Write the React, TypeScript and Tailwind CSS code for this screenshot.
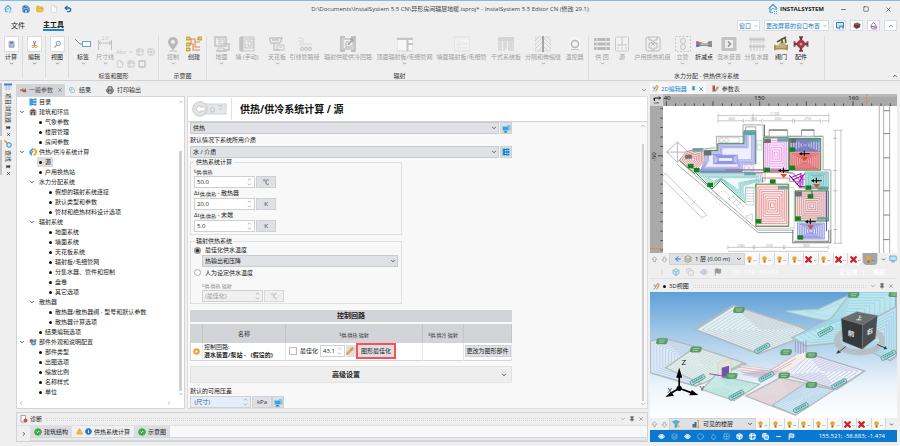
import type { ReactNode } from 'react';
import {
  AlertTriangle,
  ArrowBigDown,
  ArrowBigUp,
  ArrowLeft,
  Box,
  CheckCircle2,
  ChevronDown,
  ChevronLeft,
  ChevronRight,
  ChevronUp,
  Circle,
  Copy,
  Droplet,
  Eye,
  File,
  Flag,
  FolderOpen,
  Grid2x2,
  Info,
  Layers,
  Minus,
  Monitor,
  Pencil,
  Pin,
  Printer,
  Save,
  Square,
  Table2,
  Undo2,
  X,
} from 'lucide-react';
import clsx from 'clsx';

type Point = [number, number];

const G = '#c2c2c2';

// ---------- ribbon drawings (16x16 grid) ----------

const ribbonArt: Record<string, ReactNode> = {
  calc: (
    <>
      <rect fill="#c9d3ea" height="11" rx="1" stroke="#7487b5" width="9" x="3.5" y="2.5" />
      <path d="M5 5h6" stroke="#3c4f8d" strokeWidth="2" />
      <path d="M5 8.5h1.5M8 8.5h1.5M5 11h1.5M8 11h1.5" stroke="#5a6c9f" strokeWidth="1.5" />
      <path d="M10.5 10.5H13" stroke="#d9534f" strokeWidth="1.5" />
    </>
  ),
  cut: (
    <>
      <path d="M6 2l3 8M10 2L7 10" stroke="#555" strokeWidth="1.3" />
      <circle cx="5.5" cy="11.5" r="2" stroke="#e58a2c" strokeWidth="1.6" />
      <circle cx="10.5" cy="11.5" r="2" stroke="#e58a2c" strokeWidth="1.6" />
    </>
  ),
  view: (
    <>
      <circle cx="9.5" cy="6" fill="#d8ecfb" r="4" stroke="#5aa0dc" strokeWidth="1.5" />
      <path d="M6.5 9l-4 4.500" stroke="#e58a2c" strokeWidth="2" />
    </>
  ),
  tag: (
    <>
      <path d="M0 3l5 5h3" stroke="#888" />
      <rect fill="#fff" height="5" stroke="#6fa3c4" width="8" x="7.5" y="5.5" />
    </>
  ),
  dim: (
    <>
      <path d="M1.5 4v10M14.5 4v10M1.5 7h13M4 5L2 7l2 2M12 5l2 2-2 2" stroke={G} />
      <text fill={G} fontSize="5" x="4.5" y="4">
        2.0
      </text>
    </>
  ),
  pin: (
    <>
      <path d="M8 1a5 5 0 0 1 5 5c0 3-3 5-5 9-2-4-5-6-5-9a5 5 0 0 1 5-5z" fill="#b9b9b9" />
      <circle cx="8" cy="6" fill="#efefef" r="2" />
      <path d="M4 15h8" stroke={G} />
    </>
  ),
  create: (
    <>
      <path
        d="M2 3h7v3h5M2 8h5v6h7M5 3v5M9 6v5h5M11 3h3"
        stroke="#e8875f"
        strokeWidth="1.2"
      />
      <path
        d="M0 1h4v3H0zM12 1h4v3h-4zM0 7h4v3H0zM0 12h4v3H0z"
        fill="#f3cf3c"
        stroke="#8a7c2e"
        strokeWidth=".6"
      />
    </>
  ),
  floor: (
    <>
      <path d="M1 1h11v9H1z" stroke={G} strokeWidth="1.5" />
      <path d="M3 3h7v5H5V5h3M4 12h6v3H4z" stroke={G} />
      <path d="M10 8h5v6h-5M2 15h11" stroke={G} strokeWidth="1.5" />
    </>
  ),
  wall: (
    <>
      <path d="M1 1h14v14H1z" stroke={G} />
      <path d="M1.5 1v14M3.5 1v14" stroke={G} strokeWidth="2" />
      <path d="M6 3h8v9H6zM8 5h4v5H9V7h1" stroke={G} />
    </>
  ),
  ceiling: (
    <>
      <path d="M0 2h13l-2 5H2zM3 4h7M5 7v7h6" stroke={G} strokeWidth="1.3" />
      <path d="M8 9h7v5H8zM10 11h3" stroke={G} />
    </>
  ),
  route: (
    <>
      <path d="M1 2h5v6h9M1 5h3v6h11" stroke="#d8d8d8" />
      <circle cx="5" cy="13" r="1.5" stroke={G} />
      <circle cx="9" cy="13" r="1.5" stroke={G} />
      <circle cx="13" cy="13" r="1.5" stroke={G} />
    </>
  ),
  circuit: (
    <>
      <path d="M5 1H1v14h4M11 1h4v14h-4" stroke="#adadad" strokeWidth="1.3" />
      <path d="M3 3h8M3 3v10h10V6M6 6h3M6 6v5h5V9" stroke="#cecece" strokeWidth="1.8" />
      <path d="M8 9l5-6M10 3h3v3" stroke="#a5a5a5" strokeWidth="1.6" />
    </>
  ),
  panel: (
    <>
      <path d="M0 2h16v13H0z" fill="#f8f8f8" stroke="#d6d6d6" />
      <path d="M0 3h16M10.5 3v12M10.5 8H16" stroke="#c4c4c4" strokeWidth="2" />
    </>
  ),
  wallPanel: (
    <>
      <path d="M0 1h16v14H0z" fill="#f2f2f2" stroke="#dcdcdc" />
      <path d="M2 9c4-2 8 0 12-2M2 12h12M5 3v11" stroke="#e5e5e5" />
    </>
  ),
  dry: (
    <>
      <path d="M0 1h16v4H0z" fill="#d4d4d4" />
      <path
        d="M1 5v10M3 5v10M6 5v10M8 5v8M11 5v10M13 5v10M15 5v10"
        stroke="#d0d0d0"
        strokeWidth="1.3"
      />
    </>
  ),
  joint: (
    <>
      <path d="M0 1h16v14H0z" stroke="#d8d8d8" />
      <path
        d="M0 5l4-4M0 9l7-7M0 13l7-7M3 15l4-4M16 5l-4-4M16 9L9 2M16 13L9 6M13 15l-4-4"
        stroke="#d0d0d0"
      />
      <path d="M8 0v16" stroke="#9d9d9d" strokeWidth="1.8" />
    </>
  ),
  thermo: (
    <>
      <rect fill="#f5f5f5" height="13" rx="2" width="11" x="2.5" y="1" />
      <circle cx="8" cy="8" r="3.5" stroke="#b5b5b5" strokeWidth="1.5" />
      <path d="M4 13.500h8" stroke={G} />
    </>
  ),
  pipes: (
    <>
      <path d="M0 3.5h16M0 8h16M0 12.5h16" stroke="#b8b8b8" strokeWidth="3" />
      <path d="M3 1.5v13M12 1.5v13" stroke="#e2e2e2" />
    </>
  ),
  source: (
    <>
      <rect fill="#f2f2f2" height="14" rx="1" stroke="#cacaca" width="13" x="1.5" y="1" />
      <path d="M8 1v8M3 9h10M3 12h2M7 12h2M11 12h2" stroke="#c4c4c4" />
    </>
  ),
  station: (
    <>
      <rect height="14" rx="2" stroke="#bcbcbc" width="14" x="1" y="1" />
      <path
        d="M4 1v3h3v3H4v5h3v3M12 1v3H9v3h3v5H9v3M6 6l4 4M10 6l-4 4"
        stroke="#b8b8b8"
      />
    </>
  ),
  riser: (
    <>
      <path d="M.5.5h15v15H.5z" stroke="#c4c4c4" strokeDasharray="2 1.500" />
      <circle cx="8" cy="5" r="2.5" stroke={G} />
      <circle cx="8" cy="11" r="2.5" stroke={G} />
    </>
  ),
  reduce: (
    <>
      <path d="M2 6h3l2 1h4l2-2h3v6h-3l-2-1H5l-3 1z" fill="#8f8f8f" />
      <path d="M5 8h7" stroke="#ddd" />
      <circle cx="1.5" cy="6.5" fill="#e2574b" r="1.6" />
      <circle cx="1.5" cy="9.5" fill="#3a7bd0" r="1.6" />
    </>
  ),
  mixer: (
    <>
      <rect fill="#c2c2c2" height="14" rx="1" width="15" x=".5" y="1" />
      <rect fill="#ededed" height="8" width="8" x="4" y="4" />
      <path d="M7 5.500L9.500 8 7 10.500" stroke="#888" strokeWidth="1.3" />
    </>
  ),
  manifold: (
    <>
      <path d="M0 3.5h16M0 10.5h16" stroke="#c4c4c4" strokeWidth="2" />
      <path
        d="M2 1v6M5 1v6M8 1v6M11 1v6M14 1v6M2 8v7M5 8v7M8 8v7M11 8v7M14 8v7"
        stroke="#cbcbcb"
      />
    </>
  ),
  valve: (
    <>
      <path d="M1 8.500l3 1h7l4-1v6l-4-1H4l-3 1z" fill="#a79257" />
      <path d="M5 9.500l3-4h3l2 4z" fill="#c0ad72" />
      <path d="M4 6l9-5M9 2v5M12 1l1 6" stroke="#5f5a36" strokeWidth="1.6" />
      <path d="M3 11h10" stroke="#dccb94" />
    </>
  ),
  fitting: (
    <>
      <path d="M1.500 5v6M14.500 5v6M6 1h4M6 15h4" stroke="#777" strokeWidth="2" />
      <path d="M1 8h14M8 1v14" stroke="#8d2a33" strokeWidth="2.500" />
      <circle cx="8" cy="8" fill="#a23640" r="4" />
      <circle cx="8" cy="8" fill="#d98b91" r="1.5" />
    </>
  ),
  burner: (
    <>
      <path d="M0 5h6v5H0z" fill="#e8873c" />
      <path d="M5 4h9v8H8L5 9z" fill="#7c6a60" />
      <path d="M7 6h5" stroke="#d9cfc8" strokeWidth="1.5" />
    </>
  ),
};

function Art({ name, className }: { name: string; className?: string }) {
  return (
    <svg className={clsx('shrink-0', className)} fill="none" viewBox="0 0 16 16">
      {ribbonArt[name]}
    </svg>
  );
}

type RibbonItem = {
  label: string;
  art: string;
  width: string;
  menu?: boolean;
  active?: boolean;
};

const radiantItems: RibbonItem[] = [
  { label: '地面', art: 'floor', width: 'w-[21px]', menu: true },
  { label: '墙 (手动)', art: 'wall', width: 'w-[30px]' },
  { label: '天花板', art: 'ceiling', width: 'w-[30px]', menu: true },
  { label: '引线管路径', art: 'route', width: 'w-[25px]' },
  { label: '辐射供暖供冷回路', art: 'circuit', width: 'w-[62px]' },
  { label: '顶面辐射板/毛细管网', art: 'panel', width: 'w-[51px]', menu: true },
  { label: '墙面辐射板/毛细管', art: 'wallPanel', width: 'w-[63px]' },
  { label: '干式系统板', art: 'dry', width: 'w-[26px]' },
  { label: '分隔和伸缩缝', art: 'joint', width: 'w-[48px]', menu: true },
  { label: '温控器', art: 'thermo', width: 'w-[15px]' },
];

const hydraulicItems: RibbonItem[] = [
  { label: '供 回', art: 'pipes', width: 'w-[26px]', menu: true },
  { label: '源', art: 'source', width: 'w-[14px]' },
  { label: '户用换热机组', art: 'station', width: 'w-[47px]' },
  { label: '立管', art: 'riser', width: 'w-[13px]', menu: true },
  { label: '折减点', art: 'reduce', width: 'w-[30px]', active: true },
  { label: '混水装置', art: 'mixer', width: 'w-[20px]', menu: true },
  { label: '分集水器', art: 'manifold', width: 'w-[35px]', menu: true },
  { label: '阀门', art: 'valve', width: 'w-[14px]', menu: true, active: true },
  { label: '配件', art: 'fitting', width: 'w-[26px]', menu: true, active: true },
];

function RibbonButton({ label, art, width, menu, active }: RibbonItem) {
  return (
    <button
      className={clsx(
        'flex shrink-0 flex-col items-center whitespace-nowrap',
        width,
        active ? 'text-[#222]' : 'text-[#a0a0a0]'
      )}
      type="button"
    >
      <Art className="size-4" name={art} />
      <span className="mt-px">{label}</span>
      {menu && <ChevronDown className="size-[5px] text-[#777]" strokeWidth={3} />}
    </button>
  );
}

function BoxButton({ label, art }: { label: string; art: string }) {
  return (
    <button
      className="flex w-[23px] shrink-0 flex-col items-center border-[#dcdcdc] border-r text-[#222]"
      type="button"
    >
      <span className="flex h-4 w-[15px] items-center justify-center border border-[#dcdcdc] bg-white">
        <Art className="size-[9px]" name={art} />
      </span>
      <span className="mt-px">{label}</span>
      <ChevronDown className="size-[5px] text-[#555]" strokeWidth={3} />
    </button>
  );
}

function RibbonGroup({
  title,
  className,
  children,
}: {
  title: string;
  className: string;
  children: ReactNode;
}) {
  return (
    <div className={clsx('flex shrink-0 flex-col border-[#dcdcdc] border-r', className)}>
      <div className="flex flex-1">{children}</div>
      <div className="text-center text-[#333]">{title}</div>
    </div>
  );
}

function Logo({ className }: { className: string }) {
  return (
    <svg className={className} fill="none" viewBox="0 0 20 20">
      <path d="M4 17V9c0-3 3-5 6-8 3 3 6 5 6 8v3" stroke="#1b86d1" strokeWidth="2" />
      <path d="M1 9l9-8 9 8M4 17h6M7 13a3 3 0 0 1 6-2" stroke="#1b86d1" strokeWidth="1.5" />
      <path d="M12 14h2v2h-2zM16 14h2v2h-2zM12 18h2v2h-2zM16 18h2v2h-2z" fill="#29a7df" />
    </svg>
  );
}

function TitleBar() {
  return (
    <header className="flex h-4 items-center px-1">
      <div className="flex w-[200px] items-center gap-2">
        <Logo className="size-2" />
        <div className="flex items-center gap-[6px] pl-[2px]">
          <Save className="size-2 fill-[#9fd0f0] text-[#1f67b1]" strokeWidth={3} />
          <FolderOpen className="size-2 fill-[#f4c544] text-[#d7a52c]" />
          <File className="size-2 fill-white text-[#c9c9c9]" />
          <Undo2 className="size-2 text-[#2467a8]" strokeWidth={4} />
        </div>
      </div>
      <h1 className="flex-1 text-center text-[#444]">
        D:\Documents\InstalSystem 5.5 CN\异形房间辐层地暖.isproj* - InstalSystem 5.5 Editor CN (修改 29.1)
      </h1>
      <div className="flex w-[200px] items-center justify-end gap-4 pr-1">
        <div className="flex items-center gap-[2px]">
          <Logo className="size-[10px]" />
          <span className="font-bold text-[#222]">INSTALSYSTEM</span>
        </div>
        <Minus className="size-[7px]" />
        <Square className="size-[6px]" />
        <X className="size-[7px]" />
      </div>
    </header>
  );
}

function Ribbon() {
  const chip =
    'flex h-[11px] items-center justify-center gap-[3px] border border-[#d9dde0] bg-white text-[#1a78bd]';
  return (
    <div className="border-[#d2d2d2] border-b">
      <nav className="flex h-[17px] items-center">
        <a className="ml-[11px] text-[#222] text-[7px]" href="#file">
          文件
        </a>
        <a
          className="ml-[18px] border-[#1e86d0] border-b-2 font-bold text-[#111] text-[7px]"
          href="#main"
        >
          主工具
        </a>
        <div className="ml-auto flex gap-1 pr-[3px]">
          <button className={clsx(chip, 'w-[23px]')} type="button">
            窗口 <ChevronDown className="size-1" strokeWidth={3} />
          </button>
          <button className={clsx(chip, 'w-[65px]')} type="button">
            更改屏幕的窗口布置 <ChevronDown className="size-1" strokeWidth={3} />
          </button>
          <button aria-label="布局" className={clsx(chip, 'w-[13px]')} type="button">
            <svg className="size-2" viewBox="0 0 16 16">
              <path d="M1 1h14v11H1z" fill="#cfe6f7" stroke="#2b78b5" strokeWidth="2" />
              <path d="M6 7h9v8H6z" fill="#4f9fd8" />
              <path d="M8 11h5v4H8z" fill="#fff" />
            </svg>
          </button>
          <button aria-label="材料" className={clsx(chip, 'w-[13px]')} type="button">
            <svg className="size-2" viewBox="0 0 16 16">
              <path d="M2 3l7-2 6 3-1 7-7 3-6-4z" fill="#8a6257" />
              <path d="M2 6l6 2 6-3M2 9l6 2 6-3" fill="none" stroke="#3a2a28" strokeWidth="1.5" />
            </svg>
          </button>
          <button aria-label="颜色" className={clsx(chip, 'w-[13px]')} type="button">
            <svg className="size-2" fill="none" viewBox="0 0 16 16">
              <path d="M7 1c3 3 5 5 5 8a5 5 0 0 1-10 0c0-3 2-5 5-8z" stroke="#8855b5" strokeWidth="1.8" />
              <circle cx="11" cy="11" fill="#e27fb4" r="4" />
              <path d="M2 9h6" stroke="#3b8fd0" strokeWidth="2" />
            </svg>
          </button>
          <button aria-label="收起" className={clsx(chip, 'w-[13px]')} type="button">
            <ChevronUp className="size-[6px]" strokeWidth={3} />
          </button>
        </div>
      </nav>
      <div className="flex h-[46px] pt-[2px]">
        <div className="flex pb-[2px]">
          <BoxButton art="calc" label="计算" />
          <BoxButton art="cut" label="编辑" />
          <BoxButton art="view" label="视图" />
        </div>
        <RibbonGroup className="w-[90px]" title="标签和图形">
          <RibbonButton active art="tag" label="标签" menu width="w-[28px]" />
          <RibbonButton art="dim" label="尺寸线" menu width="w-4" />
          <div className="flex flex-col gap-1 pt-3 pl-[3px] text-[#c0c0c0]">
            <div className="flex items-center gap-[3px]">
              <span>Abc</span>
              <ChevronDown className="size-1 text-[#888]" strokeWidth={3} />
              <Table2 className="size-2" />
              <Grid2x2 className="size-2" />
            </div>
            <div className="flex items-center gap-[3px]">
              <File className="size-2" />
              <Table2 className="size-2" />
              <Square className="size-2" strokeWidth={4} />
            </div>
          </div>
        </RibbonGroup>
        <RibbonGroup className="w-12" title="示意图">
          <RibbonButton art="pin" label="控制" menu width="w-[28px]" />
          <RibbonButton active art="create" label="创建" width="w-[14px]" />
        </RibbonGroup>
        <RibbonGroup className="w-[382px] pl-[4px]" title="辐射">
          {radiantItems.map((item) => (
            <RibbonButton key={item.label} {...item} />
          ))}
        </RibbonGroup>
        <RibbonGroup className="w-[236px]" title="水力分配 - 供热供冷系统">
          {hydraulicItems.map((item) => (
            <RibbonButton key={item.label} {...item} />
          ))}
        </RibbonGroup>
        <ChevronUp className="mt-auto mr-[2px] mb-px ml-auto size-[6px]" strokeWidth={3} />
      </div>
    </div>
  );
}

// ---------- navigation tree ----------

type TreeRow = {
  label: string;
  level: 0 | 1 | 2;
  open?: boolean;
  icon?: string;
  selected?: boolean;
};

const treeRows: TreeRow[] = [
  { label: '目录', level: 0, icon: 'toc' },
  { label: '建筑和环境', level: 0, open: true, icon: 'building' },
  { label: '气象参数', level: 1 },
  { label: '楼层管理', level: 1 },
  { label: '房间参数', level: 1 },
  { label: '供热/供冷系统计算', level: 0, open: true, icon: 'heat' },
  { label: '源', level: 1, selected: true },
  { label: '户用换热站', level: 1 },
  { label: '水力分配系统', level: 1, open: true },
  { label: '假想的辐射系统连接', level: 2 },
  { label: '默认类型和参数', level: 2 },
  { label: '管材和绝热材料设计选项', level: 2 },
  { label: '辐射系统', level: 1, open: true },
  { label: '地面系统', level: 2 },
  { label: '墙面系统', level: 2 },
  { label: '天花板系统', level: 2 },
  { label: '辐射板/毛细管网', level: 2 },
  { label: '分集水器、管件和控制', level: 2 },
  { label: '盘卷', level: 2 },
  { label: '其它选项', level: 2 },
  { label: '散热器', level: 1, open: true },
  { label: '散热器/散热器阀 - 型号和默认参数', level: 2 },
  { label: '散热器计算选项', level: 2 },
  { label: '结果编辑选项', level: 1 },
  { label: '部件外观和说明配置', level: 0, open: true, icon: 'parts' },
  { label: '部件类型', level: 1 },
  { label: '出图选项', level: 1 },
  { label: '缩放比例', level: 1 },
  { label: '名称样式', level: 1 },
  { label: '单位', level: 1 },
];

function TreeIcon({ name }: { name: string }) {
  return (
    <svg className="mr-[2px] size-2 shrink-0" fill="none" viewBox="0 0 16 16">
      {name === 'toc' && (
        <>
          <path d="M1 1h5v14H1zM9 1h6v4H9zM9 6h6v4H9zM9 11h6v4H9z" fill="#35a0e4" />
          <path d="M6 3h3M6 8h3M6 13h3M7.500 3v10" stroke="#0b5b96" strokeWidth="1.5" />
        </>
      )}
      {name === 'building' && (
        <>
          <path d="M2 5l6-4 6 4v9H2z" fill="#b7a7a5" stroke="#716866" />
          <path d="M5 14V8h6v6M4 5h8" stroke="#544b4a" strokeWidth="2" />
        </>
      )}
      {name === 'heat' && (
        <>
          <path d="M8 1L3 6c-2 3 0 7 3 8M4 11l4-5" stroke="#35a3dc" strokeWidth="3" />
          <path d="M9 2c7 2 7 10 0 12" stroke="#f4a52c" strokeWidth="4" />
        </>
      )}
      {name === 'parts' && (
        <>
          <circle cx="5" cy="6" fill="#d8424d" r="4" />
          <circle cx="12" cy="5" fill="#59a84b" r="3" />
          <circle cx="9" cy="10" fill="#3b9ae0" r="5" />
          <path d="M7 10h4" stroke="#fff" strokeWidth="2" />
        </>
      )}
    </svg>
  );
}

function NavigationTree() {
  return (
    <aside className="flex w-[169px] shrink-0 flex-col border border-[#d5d5d5] bg-white">
      <div className="flex min-h-0 flex-1">
        <ul className="flex min-w-0 flex-1 flex-col">
          {treeRows.map((row) => (
            <li
              className={clsx(
                'flex min-h-[10px] flex-1 items-center whitespace-nowrap text-[#222]',
                row.level === 0 && 'pl-[2px]',
                row.level === 1 && (row.open ? 'pl-3' : 'pl-[20px]'),
                row.level === 2 && 'pl-[30px]'
              )}
              key={row.label}
            >
              {row.level === 0 && !row.open && <span className="w-[10px]" />}
              {row.open && <ChevronDown className="mr-1 size-[6px]" strokeWidth={3} />}
              {row.icon && <TreeIcon name={row.icon} />}
              <span
                className={clsx(
                  'flex h-[10px] items-center gap-[3px]',
                  !row.open && !row.icon && 'px-[2px]',
                  row.selected && 'bg-[#dcdcdc]'
                )}
              >
                {!row.open && !row.icon && <span className="size-[3px] rounded-full bg-[#111]" />}
                {row.label}
              </span>
            </li>
          ))}
        </ul>
        <div className="flex w-[7px] flex-col items-center pt-[2px]">
          <ChevronUp className="size-[6px] text-[#777]" />
          <div className="mt-[46px] w-[3px] flex-1 bg-[#cfd0d3]" />
          <ChevronDown className="size-[6px] text-[#777]" />
        </div>
      </div>
      <div className="flex h-[11px] items-center justify-between pr-3 pl-px text-[#777]">
        <ChevronLeft className="size-[6px]" />
        <ChevronRight className="size-[6px]" />
      </div>
    </aside>
  );
}

// ---------- form controls ----------

function Select({ id, value, className }: { id: string; value: string; className?: string }) {
  return (
    <div className={clsx('relative h-3', className)}>
      <select
        aria-label={value}
        className="h-3 w-full appearance-none border border-[#c9cacd] bg-[#e0e1e4] px-[2px] text-[#222] leading-[8px]"
        defaultValue={value}
        id={id}
      >
        <option>{value}</option>
      </select>
      <ChevronDown
        className="pointer-events-none absolute top-[3px] right-[2px] size-[6px] text-[#333]"
        strokeWidth={3}
      />
    </div>
  );
}

function Spinner({
  id,
  value,
  className,
  tone = 'normal',
}: {
  id: string;
  value: string;
  className: string;
  tone?: 'normal' | 'muted' | 'blue';
}) {
  return (
    <div
      className={clsx(
        'flex h-3 items-center border border-[#d0d0d0]',
        tone === 'normal' && 'bg-white text-[#222]',
        tone === 'muted' && 'bg-[#f0f0f0] text-[#999]',
        tone === 'blue' && 'bg-[#e3eefa] text-[#3c5a94]',
        className
      )}
    >
      <input
        aria-label={value}
        className="w-0 min-w-0 flex-1 bg-transparent pl-[2px] leading-[8px] outline-none"
        defaultValue={value}
        disabled={tone === 'muted'}
        id={id}
      />
      <span className="flex flex-col pr-[2px] text-[#888]">
        <ChevronUp className="size-[5px]" strokeWidth={3} />
        <ChevronDown className="size-[5px]" strokeWidth={3} />
      </span>
    </div>
  );
}

function Unit({ children, muted }: { children: ReactNode; muted?: boolean }) {
  return (
    <button
      className={clsx(
        'h-3 w-5 border',
        muted
          ? 'border-[#d8d8d8] bg-[#efefef] text-[#999]'
          : 'border-[#cfd0d3] bg-[#dfe0e3] text-[#333]'
      )}
      type="button"
    >
      {children}
    </button>
  );
}

function Sub({ children }: { children: ReactNode }) {
  return <span className="relative top-px text-[5px]">{children}</span>;
}

const heatingFields = [
  { id: 'supply', prefix: 't', sub: '供,供热', suffix: '', value: '50.0', unit: '℃' },
  { id: 'radiator', prefix: 'Δt', sub: '供,供热', suffix: ' - 散热器', value: '20.0', unit: 'K' },
  { id: 'terminal', prefix: 'Δt', sub: '供,供热', suffix: ' - 末端', value: '5.0', unit: 'K' },
];

function SideButton({ label, children }: { label: string; children: ReactNode }) {
  return (
    <button
      aria-label={label}
      className="flex h-3 w-3 items-center justify-center border border-[#cfd0d3] bg-[#dfe0e3]"
      type="button"
    >
      {children}
    </button>
  );
}

function ScreenIcon() {
  return (
    <svg className="size-[9px]" viewBox="0 0 18 16">
      <path d="M10 1h7v11h-7z" fill="#7cc6ea" />
      <path d="M1 4h12v8H1z" fill="#39a5dd" stroke="#8cd0f0" />
      <path d="M5 13h4v1.500h2V16H3v-1.500h2z" fill="#2b6f99" />
    </svg>
  );
}

function CircuitTable() {
  const head = 'border-[#c4c5c8] border-r font-normal text-[#333]';
  const cell = 'border-[#e6e6e6] border-r p-0';
  return (
    <table className="mt-[2px] w-full table-fixed border-collapse border border-[#d5d5d5] bg-white">
      <colgroup>
        <col className="w-3" />
        <col className="w-[83px]" />
        <col />
        <col className="w-[41px]" />
        <col className="w-12" />
      </colgroup>
      <thead>
        <tr className="h-[18px] bg-[#d3d4d8]">
          <th className={head} />
          <th className={head}>名称</th>
          <th className={head}>
            t<Sub>供,供热 辐射</Sub>
          </th>
          <th className={head}>
            t<Sub>供,供冷 辐射</Sub>
          </th>
          <th className={head} />
        </tr>
      </thead>
      <tbody>
        <tr className="h-[18px]">
          <td className={cell}>
            <svg className="mx-auto size-[7px]" viewBox="0 0 16 16">
              <circle cx="8" cy="8" fill="#f3a034" r="7.5" />
              <path d="M6 4l5 4-5 4z" fill="#fff" />
            </svg>
          </td>
          <td className={clsx(cell, 'pl-px')}>
            <div className="text-[#222]">控制回路:</div>
            <div className="font-bold text-[#222]">混水装置/泵站 - &nbsp; (假设的)</div>
          </td>
          <td className={clsx(cell, 'pl-[3px]')}>
            <div className="flex items-center whitespace-nowrap">
              <label className="flex items-center gap-[3px]" htmlFor="optimise">
                <input
                  className="size-2 appearance-none border border-[#bdbdbd] bg-white"
                  id="optimise"
                  type="checkbox"
                />
                最佳化
              </label>
              <Spinner className="ml-[2px] w-[25px]" id="optimised" value="43.1" />
              <button aria-label="编辑" className="ml-px h-3 w-[10px] bg-[#dfe0e3]" type="button">
                <Pencil className="size-2 fill-[#f0b13c] text-[#c9852b]" />
              </button>
              <button
                className="h-4 w-10 border-2 border-[#f85055] bg-[#dfe0e3] text-[#222]"
                type="button"
              >
                图形最佳化
              </button>
            </div>
          </td>
          <td className={cell} />
          <td className={cell}>
            <button
              className="mx-auto block h-3 w-[46px] whitespace-nowrap border border-[#cfd0d3] bg-[#dfe0e3] text-[#222]"
              type="button"
            >
              更改为图形部件
            </button>
          </td>
        </tr>
      </tbody>
    </table>
  );
}

function SourceForm() {
  const fieldset = 'w-[212px] border border-[#e0e0e0] px-[3px]';
  return (
    <section className="flex min-w-0 flex-1 flex-col border border-[#dcdcdc] bg-[#f8f8f8]">
      <div className="flex h-[25px] shrink-0 items-center border-[#d2d2d2] border-b bg-white pl-1">
        <svg className="h-4 w-[35px]" fill="none" viewBox="0 0 35 16">
          <path d="M10 3h24v10H10z" fill="#e6e7e9" stroke="#d0d1d4" />
          <circle cx="8" cy="8" fill="#e2e3e5" r="7.3" stroke="#cbccd0" />
          <path d="M8 4L4 8l4 4v-2h5V6H8z" fill="#fff" stroke="#c2c3c6" strokeWidth=".7" />
          <path d="M18 8l2.500-2L23 8M19 8v3h3V8M26 5h5M27 7l1.500 2L30 7" stroke="#c4c5c8" />
        </svg>
        <span className="mx-1 h-[22px] w-px bg-[#e2e2e2]" />
        <h2 className="ml-1 font-bold text-[#111] text-[10px] leading-[14px]">
          供热/供冷系统计算 / 源
        </h2>
      </div>
      <div className="flex min-h-0 flex-1">
        <div className="min-w-0 flex-1 overflow-hidden">
          <div className="w-[324px] max-w-full pl-[2px]">
            <div className="flex gap-px">
              <Select className="flex-1" id="mode" value="供热" />
              <SideButton label="显示">
                <ScreenIcon />
              </SideButton>
            </div>
            <label className="flex h-3 items-center" htmlFor="medium">
              默认情况下系统所用介质
            </label>
            <div className="flex gap-px">
              <Select className="flex-1" id="medium" value="水 / 介质" />
              <SideButton label="目录">
                <svg className="size-2" viewBox="0 0 16 16">
                  <path
                    d="M1 1h5v14H1zM8 1h7v4H8zM8 6h7v4H8zM8 11h7v4H8z"
                    fill="#1e93dd"
                  />
                  <path d="M5 3h4M5 8h4M5 13h4" stroke="#0b5b96" strokeWidth="2" />
                </svg>
              </SideButton>
            </div>
            <fieldset className={clsx(fieldset, 'pb-[2px]')}>
              <legend className="px-[2px]">供热系统计算</legend>
              {heatingFields.map((field) => (
                <div key={field.id}>
                  <label className="block h-[10px] leading-[10px]" htmlFor={field.id}>
                    {field.prefix}
                    <Sub>{field.sub}</Sub>
                    {field.suffix}
                  </label>
                  <div className="flex gap-px">
                    <Spinner className="w-[61px]" id={field.id} value={field.value} />
                    <Unit>{field.unit}</Unit>
                  </div>
                </div>
              ))}
            </fieldset>
            <fieldset className={clsx(fieldset, 'mt-[2px] pb-px')}>
              <legend className="px-[2px]">辐射供热系统</legend>
              <label className="flex h-[10px] items-center gap-1" htmlFor="auto">
                <input
                  className="size-[7px] appearance-none rounded-full border border-[#999] bg-white checked:border-2 checked:bg-[#222]"
                  defaultChecked
                  id="auto"
                  name="supplyMode"
                  type="radio"
                />
                最佳化供水温度
              </label>
              <Select className="ml-2" id="output" value="热输出和压降" />
              <label className="flex h-[11px] items-center gap-1" htmlFor="manual">
                <input
                  className="size-[7px] appearance-none rounded-full border border-[#aaa] bg-white checked:bg-[#222]"
                  id="manual"
                  name="supplyMode"
                  type="radio"
                />
                人为设定供水温度
              </label>
              <label
                className="mt-[2px] ml-2 block h-[10px] text-[#888] leading-[10px]"
                htmlFor="manualValue"
              >
                t<Sub>供,供热 辐射</Sub>
              </label>
              <div className="ml-2 flex gap-px">
                <Spinner className="w-[61px]" id="manualValue" tone="muted" value="(最佳化)" />
                <Unit muted>℃</Unit>
              </div>
            </fieldset>
            <h3 className="mt-[6px] h-3 bg-[#d3d4d8] text-center font-bold text-[7px] leading-[12px]">
              控制回路
            </h3>
            <CircuitTable />
            <button
              className="mt-[5px] flex h-[17px] w-full items-center border border-[#e2e2e2] bg-[#eee] pr-1"
              type="button"
            >
              <span className="flex-1 font-bold text-[7px]">高级设置</span>
              <ChevronDown className="size-[6px]" strokeWidth={3} />
            </button>
            <label className="mt-[3px] flex h-[10px] items-center" htmlFor="pressure">
              默认的可用压差
            </label>
            <div className="flex">
              <Spinner className="mr-px w-[61px]" id="pressure" tone="blue" value=" (尺寸)" />
              <Unit>kPa</Unit>
              <SideButton label="显示压差">
                <ScreenIcon />
              </SideButton>
            </div>
          </div>
        </div>
        <div className="flex w-[9px] flex-col items-center pt-px pb-px">
          <ChevronUp className="size-[6px] text-[#777]" />
          <div className="mt-[15px] w-[2px] flex-1 bg-[#d0d0d0]" />
          <ChevronDown className="size-[6px] text-[#777]" />
        </div>
      </div>
    </section>
  );
}

function DottedGrip() {
  return <span className="mx-1 h-[3px] flex-1 border-[#dadada] border-y border-dotted" />;
}

function PanelTools() {
  return (
    <div className="flex items-center gap-[3px] text-[#666]">
      <ChevronDown className="size-[6px]" />
      <Pin className="size-[6px] fill-current" />
      <X className="size-[6px]" />
    </div>
  );
}

function Diagnostics() {
  const tab = 'flex h-[11px] items-center gap-[2px] px-1';
  return (
    <section className="mt-[3px] flex h-[30px] shrink-0 flex-col border border-[#d2d2d2]">
      <div className="flex h-3 items-center px-[3px]">
        <svg className="mr-[2px] size-2" viewBox="0 0 16 16">
          <path d="M2 1h9v13H2z" fill="#fff" stroke="#555" />
          <circle cx="11" cy="11" fill="#d94a4a" r="4" />
        </svg>
        诊断
        <DottedGrip />
        <PanelTools />
      </div>
      <div className="flex flex-1 border-[#e0e0e0] border-t">
        <div className="flex w-[13px] items-center justify-center">
          <ChevronRight className="size-[6px]" strokeWidth={3} />
        </div>
        <div className="min-w-0 flex-1">
          <div className="flex bg-[#f8f8f8]">
            <button className={clsx(tab, 'bg-[#dcdde0]')} type="button">
              <CheckCircle2 className="size-2 fill-[#3fae49] text-[#3fae49] [&>path]:stroke-white" strokeWidth={3} />
              建筑结构
            </button>
            <button className={clsx(tab, 'bg-[#f0f0f0]')} type="button">
              <AlertTriangle className="size-[7px] fill-[#f8c53a] text-[#d29b1b]" />
              <Info className="size-[7px] fill-[#2b7bc9] text-[#2b7bc9] [&>path]:stroke-white" strokeWidth={3} />
              供热系统计算
            </button>
            <button className={clsx(tab, 'bg-[#dcdde0]')} type="button">
              <CheckCircle2 className="size-2 fill-[#3fae49] text-[#3fae49] [&>path]:stroke-white" strokeWidth={3} />
              示意图
            </button>
          </div>
          <div className="mr-px h-[4px] border border-[#d3d6da] bg-[#e9eaec]" />
        </div>
      </div>
    </section>
  );
}

// ---------- 2D plan ----------

function toPoints(points: Point[]) {
  return points.map((p) => p.join(',')).join(' ');
}

function Loops({
  points,
  color,
  count,
  fill = 'none',
}: {
  points: Point[];
  color: string;
  count: number;
  fill?: string;
}) {
  const cx = points.reduce((s, p) => s + p[0], 0) / points.length;
  const cy = points.reduce((s, p) => s + p[1], 0) / points.length;
  return (
    <>
      {Array.from({ length: count }, (_, i) => {
        const k = 0.97 * (1 - i / count);
        const scaled = points.map(([x, y]): Point => [cx + (x - cx) * k, cy + (y - cy) * k]);
        return (
          <polygon
            fill={i === 0 ? fill : 'none'}
            key={i}
            points={toPoints(scaled)}
            stroke={color}
            strokeWidth={1.5}
          />
        );
      })}
    </>
  );
}

function rect(x1: number, y1: number, x2: number, y2: number): Point[] {
  return [
    [x1, y1],
    [x2, y1],
    [x2, y2],
    [x1, y2],
  ];
}

const planRooms: { points: Point[]; color: string; count: number; fill: string }[] = [
  { points: [[103, 240], [120, 215], [150, 206], [175, 210], [174, 246], [152, 270], [138, 270]], color: '#b04a50', count: 6, fill: '#fbeaea' },
  { points: rect(353, 172, 428, 272), color: '#e05ad8', count: 7, fill: '#fff0ff' },
  { points: rect(430, 174, 523, 214), color: '#35358f', count: 6, fill: '#b9bde4' },
  { points: rect(430, 216, 523, 268), color: '#c8353d', count: 7, fill: '#f4a9a9' },
  { points: rect(330, 310, 428, 436), color: '#dc4a50', count: 9, fill: '#fdf0f0' },
  { points: rect(476, 273, 547, 325), color: '#2f9a96', count: 7, fill: '#d5efee' },
  { points: rect(447, 330, 546, 420), color: '#b4565c', count: 8, fill: '#f6e5e5' },
  { points: rect(453, 425, 535, 474), color: '#4b51c8', count: 6, fill: '#dadcfa' },
];

// L-shaped living room: four runs follow the walls, the rest coil in the middle
function LivingRoomLoops() {
  return (
    <g stroke="#5b5fd0" strokeWidth="1.5">
      {[0, 4, 8, 12].map((i) => (
        <path
          d={`M${178 + i} ${210 + i}H${217 + i}V${190 + i}H${295 + i}V${152 + i}H${330 - i}V${250 - i}H${290 - i}V${272 - i}H${165 + i}L${178 + i} ${240}Z`}
          fill={i === 0 ? '#eef0ff' : 'none'}
          key={i}
        />
      ))}
      {[0, 4, 8, 12, 15].map((i) => (
        <path d={`M${204 + i} ${224 + i / 2}H${276 - i}V${250 - i / 2}H${204 + i}Z`} key={i} />
      ))}
    </g>
  );
}

function HallLoops() {
  return (
    <g stroke="#54a9a9" strokeWidth="1.5">
      <path
        d="M150 275H358V300L330 308V320H300L297 365L225 300L200 325Z"
        fill="#eefafa"
      />
      {[1, 2, 3, 4].map((k) => (
        <path
          d={`M${354 - 5 * k} ${300 - k}V${275 + 4 * k}H${152 + 9 * k}L${200 + k} ${322 - 5 * k}L${225 + k} ${297 - k}L${297 - 4 * k} ${362 - 8 * k}L${296 - 4 * k} ${318 - 3 * k}Z`}
          key={k}
        />
      ))}
    </g>
  );
}

const planMarkers: Point[] = [
  [128, 250], [146, 262], [186, 306], [355, 261], [372, 296], [430, 201], [430, 255],
  [330, 414], [447, 406], [454, 462], [478, 314], [484, 340],
];

const planArrows: Point[] = [
  [474, 222], [412, 272], [510, 302], [492, 424],
];

function FloorPlan() {
  return (
    <svg
      className="h-full w-full bg-white"
      fill="none"
      preserveAspectRatio="xMidYMid slice"
      viewBox="48 78 708 438"
    >
      {/* dimension chains */}
      <g stroke="#777" strokeWidth="1.2">
        <path d="M218 106H547M218 122H293M296 122H348M352 122H440M445 122H522M526 122H547M218 100v28M293 116v12M322 100v22M348 116v12M440 116v12M445 116v12M522 116v12M547 100v28" />
        <path d="M247 498H323M327 498H412M416 498H545M247 510H545M247 492v12M323 492v12M327 492v12M412 492v12M416 492v12M545 492v12" />
        <path d="M566 150V486M583 150V486M560 150h28M560 174h12M560 270h12M560 330h12M560 445h12M560 486h28" />
        <path d="M50 292L170 410M62 278L185 402M50 292l12-14M170 410l15-8M140 370l12-12" />
      </g>
      <path d="M697 78v438M710 78v438M728 78v438" stroke="#666" strokeWidth="1.5" />
      <path d="M710 92h18M710 160h18M710 232h18M710 330h18M710 402h18M710 475h18" stroke="#444" strokeWidth="2" />
      <g fill="#999" fontSize="9">
        <text x="372" y="104">11 500</text>
        <text x="248" y="119">2650</text>
        <text x="312" y="119">1950</text>
        <text x="386" y="119">3300</text>
        <text x="474" y="119">2750</text>
        <text x="276" y="496">2560</text>
        <text x="360" y="496">3100</text>
        <text x="470" y="496">3300</text>
      </g>
      {/* walls */}
      <g stroke="#9a9a9a" strokeWidth="2.5">
        <path d="M213 210V168h80M292 190V134h60v34M300 150v-10h30v10" />
        <path d="M352 168h18v-20h54v20h42v-20h37v20h27v100h23v180M530 168H352" />
        <path d="M370 150h54M466 150h38M356 134v34" stroke="#777" strokeWidth="3" />
        <path d="M172 206l38-4M103 240l47 44 188 163h104M97 252l240 202h105" />
        <path d="M440 446v38h113v-38M547 446v34h-102" stroke="#777" strokeWidth="3" />
        <path d="M97 185l30 27-30 33-32-30zM97 185v60M65 215h62" strokeWidth="2" />
        <path d="M127 212l-20 28M127 212l45-8" strokeWidth="2" />
      </g>
      {/* stairs and fixtures */}
      <g stroke="#999" strokeWidth="1.2">
        <path d="M300 322h24v50h-24zM300 330h24M300 338h24M300 346h24M300 354h24M300 362h24" />
        <path d="M219 172h62v15h-62zM295 252h30v20h-30zM334 180h14v28h-14zM334 194h14" />
        <circle cx="228" cy="180" r="6" />
        <circle cx="243" cy="180" r="6" />
        <circle cx="303" cy="261" r="6" />
        <circle cx="317" cy="261" r="6" />
        <circle cx="232" cy="352" r="20" strokeDasharray="4 4" />
        <path d="M205 330l22 30M246 350l40 38M258 342l38 36M252 356l14-12M262 366l14-12M272 376l14-12M300 405l20-6v20z" />
        <path d="M430 320h14v125M432 440h12M334 442h100" />
      </g>
      <LivingRoomLoops />
      <HallLoops />
      {planRooms.map((room) => (
        <Loops key={toPoints(room.points)} {...room} />
      ))}
      <g stroke="#32913c" strokeWidth="2.5">
        <path d="M353 172h75v100h-75zM430 174h93v95h-93zM330 310h98v126h-98zM447 330h99v90h-99z" />
        <path d="M178 210h39v-20h78v-38h35v98M150 275l50 50 25-25 72 65M165 272h125M103 240l47 40" />
      </g>
      {/* mains */}
      <path d="M240 268H430M330 276H440l20 20h15" stroke="#e0393f" strokeWidth="2" />
      <path d="M160 268H400l40 12 28 26M165 276h165" stroke="#3f45c9" strokeWidth="1.5" />
      <path d="M436 290l30-12M440 298l30-14v30M452 312l24-34M464 320v-40" stroke="#a012c4" strokeWidth="3" />
      <path d="M430 284l30 34h16" stroke="#2512a8" strokeWidth="3" />
      <path d="M497 328v14M540 330v120" stroke="#4a4fd0" strokeWidth="3" />
      <path d="M430 302h30v20h84M350 306V292h80v10" stroke="#e0393f" strokeWidth="2" />
      <g fill="#4f9c9a">
        <path d="M296 154h34v10h-34zM490 175h32v10h-32zM142 203h32v10h-32zM296 276h34v8h-34zM394 174h32v10h-32zM396 315h32v10h-32zM514 318h32v10h-32zM512 408h32v8h-32z" opacity=".8" />
      </g>
      <g fill="#5e5e5e">
        <path d="M355 175h20v13h-20zM432 175h18v12h-18zM176 211h22v14h-22zM447 332h20v15h-20zM120 223h20v12h-20z" opacity=".85" />
      </g>
      {planMarkers.map(([x, y]) => (
        <rect fill="#16801f" height="13" key={`${x}-${y}`} width="17" x={x} y={y} />
      ))}
      {planArrows.map(([x, y]) => (
        <g key={`${x}-${y}`}>
          <path d={`M${x - 10} ${y - 2}h26M${x} ${y - 11}v16`} stroke="#000" strokeWidth="3" />
          <path d={`M${x - 16} ${y - 2}l9-5v10z`} fill="#000" />
          <path d={`M${x - 9} ${y + 8}h20l-10 12z`} fill="#e04a18" />
        </g>
      ))}
    </svg>
  );
}

function HorizontalRuler() {
  const ticks = Array.from({ length: 25 }, (_, i) => 10 + i * 28);
  return (
    <svg
      className="h-3 min-w-0 flex-1 bg-[#a9a9a9]"
      preserveAspectRatio="xMinYMid slice"
      viewBox="0 0 708 36"
    >
      <path d="M0 0h708v8H0z" fill="#bababa" />
      {ticks.map((x, i) => (
        <path d={`M${x} ${i % 5 === 0 ? 22 : 28}V36`} key={x} stroke="#222" strokeWidth="2" />
      ))}
      <path d="M611 0v36" stroke="#e0823a" strokeWidth="2" />
      <g fill="#111" fontSize="18">
        <text x="2" y="17">40</text>
        <text x="274" y="17">150</text>
        <text x="556" y="17">160</text>
      </g>
    </svg>
  );
}

function VerticalRuler() {
  const ticks = Array.from({ length: 16 }, (_, i) => 8 + i * 28);
  return (
    <svg
      className="h-full w-[13px] shrink-0 bg-[#a9a9a9]"
      preserveAspectRatio="xMidYMin slice"
      viewBox="0 0 39 438"
    >
      {ticks.map((y, i) => (
        <path d={`M${i === 5 ? 24 : 31} ${y}H39`} key={y} stroke="#222" strokeWidth="2" />
      ))}
      <text fill="#111" fontSize="18" transform="rotate(-90 17 164)" x="17" y="164">
        -50
      </text>
      <path d="M0 424h39" stroke="#e0823a" strokeWidth="2" />
    </svg>
  );
}

function LayerTabs({ marks, last }: { marks: string; last?: boolean }) {
  return (
    <>
      {marks.split('').map((mark, i) => (
        <button
          className={clsx(
            'flex h-3 min-w-0 flex-1 items-center justify-center gap-px rounded-b-sm border-[#d5d5d5] border-r',
            last && i === marks.length - 1 ? 'bg-[#a5a5a5]' : 'bg-[#f8f8f8]'
          )}
          key={i}
          type="button"
        >
          {mark === 'x' ? (
            <svg className="size-[7px] shrink-0" viewBox="0 0 14 14">
              <path d="M1 1l12 12M13 1L1 13" stroke="#cf2027" strokeWidth="4" />
              <path d="M3 3h8v8H3z" fill="#cf2027" opacity=".6" />
            </svg>
          ) : (
            <svg className="h-[7px] w-[5px] shrink-0" viewBox="0 0 10 14">
              <circle cx="5" cy="5" fill="#f4a522" r="4.5" />
              <path d="M3 9h4v4H3z" fill="#7c6a47" />
            </svg>
          )}
          <span>..</span>
        </button>
      ))}
      <ChevronDown className="mx-[3px] size-[5px] shrink-0" strokeWidth={3} />
    </>
  );
}

function FloorArrows() {
  return (
    <div className="flex w-[19px] shrink-0 items-center justify-around text-[#8a8a8a]">
      <ArrowBigUp className="size-[7px]" />
      <ArrowBigDown className="size-[7px]" />
    </div>
  );
}

function SketchIcon() {
  return (
    <svg className="size-[7px] shrink-0" fill="none" viewBox="0 0 16 16">
      <path d="M1 5h5M3 8h4M1 14c6 0 6-9 9-13l4 2c-1 4-3 8-6 12" stroke="#777" strokeWidth="1.5" />
      <path d="M10 4l3 2-3 7" stroke="#e3a236" strokeWidth="2.5" />
    </svg>
  );
}

function PlanPanel() {
  return (
    <section className="flex min-h-0 flex-[146] basis-[52px] flex-col">
      <div className="flex h-[11px] shrink-0 items-center whitespace-nowrap">
        <button
          className="flex h-full shrink-0 items-center gap-[2px] bg-[#f8f8f8] px-[2px] text-[#1583cf]"
          type="button"
        >
          <SketchIcon />
          <span>2D编辑器</span>
          <Pin className="ml-[2px] size-[5px] shrink-0 fill-current" />
          <X className="size-[6px] shrink-0" strokeWidth={3} />
        </button>
        <button className="flex shrink-0 items-center gap-[3px] pl-[6px] text-[#333]" type="button">
          <svg className="size-[7px]" viewBox="0 0 14 14">
            <path d="M1 1h5v12H1z" fill="#c1523a" />
            <path d="M5 12l6-9 2 2-6 8z" fill="#d9a86a" stroke="#777" />
          </svg>
          参数表
        </button>
      </div>
      <div className="flex h-3 shrink-0">
        <div className="flex w-[13px] shrink-0 flex-col items-center justify-center bg-[#d6d6d6] text-[4px] leading-[4px]">
          <svg className="h-[5px] w-2" fill="none" viewBox="0 0 16 10">
            <path d="M3 10V4h12M3 4l-3 3M12 1l3 3-3 3" stroke="#111" strokeWidth="2" />
          </svg>
          cm
        </div>
        <HorizontalRuler />
      </div>
      <div className="flex min-h-0 flex-1">
        <VerticalRuler />
        <div className="min-w-0 flex-1">
          <FloorPlan />
        </div>
      </div>
      <div className="flex h-3 shrink-0 items-center">
        <FloorArrows />
        <div className="flex h-3 w-[76px] shrink-0 items-center border border-[#d2d2d2] bg-[#dfe0e3] pl-1">
          <ArrowLeft className="size-2 text-[#2b7bc9]" strokeWidth={3} />
          <Layers className="ml-[2px] size-2 text-[#8a7a5a]" />
          <select
            aria-label="楼层"
            className="w-0 flex-1 appearance-none bg-transparent pl-[3px] leading-[8px]"
            defaultValue="1 层 (0.00 m)"
          >
            <option>1 层 (0.00 m)</option>
          </select>
          <ChevronDown className="mr-[2px] size-[6px]" strokeWidth={3} />
        </div>
        <LayerTabs last marks="bbbbxbxxb" />
        <Monitor className="size-2 shrink-0 fill-[#bfe0f5] text-[#4b9bc9]" />
      </div>
      <div className="flex h-[14px] shrink-0 items-center gap-[6px] border-[#e2e2e2] border-b pl-2 text-[#bbb]">
        <Minus className="size-2 rotate-90" />
        <Box className="size-2 fill-[#cfe6f4] text-[#6fa6c6]" />
        <Copy className="size-2" />
        <Eye className="size-2 text-[#9c97c4]" />
        <Flag className="size-2 fill-[#999] text-[#888]" />
        <span className="ml-1 text-white">161.374; -59.653</span>
        <span className="ml-auto pr-3 font-bold text-white">正交线 &nbsp; | &nbsp; &nbsp; 捕捉</span>
      </div>
    </section>
  );
}

// ---------- 3D view ----------

const slabs: { points: Point[]; color: string; count: number; fill: string }[] = [
  { points: [[12, 190], [50, 180], [150, 208], [300, 258], [150, 325], [12, 285]], color: '#a4b8e0', count: 11, fill: '#dcecf5' },
  { points: [[150, 208], [292, 255], [170, 318], [60, 270]], color: '#b9cdc6', count: 10, fill: '#e6f2f0' },
  { points: [[262, 83], [465, 148], [500, 166], [340, 228], [148, 155]], color: '#b7b6c2', count: 12, fill: '#dff1f4' },
  { points: [[420, 100], [520, 94], [620, 48], [640, 110], [560, 130], [500, 120]], color: '#9bd3e2', count: 2, fill: '#bde6ee' },
  { points: [[620, 40], [755, 40], [755, 95], [570, 196], [480, 205], [440, 180], [560, 120]], color: '#86c9dc', count: 10, fill: '#bde6ee' },
  { points: [[755, 85], [755, 235], [735, 248], [640, 205], [600, 170]], color: '#8fb4dd', count: 8, fill: '#bfe6f0' },
  { points: [[480, 225], [658, 280], [575, 335], [415, 290]], color: '#a8a4d6', count: 8, fill: '#eef4fa' },
  { points: [[210, 292], [340, 320], [265, 368], [170, 335]], color: '#9fd8d2', count: 8, fill: '#cfeeea' },
  { points: [[405, 300], [565, 337], [450, 412], [302, 355]], color: '#d3b6bc', count: 14, fill: '#ebe9ec' },
  { points: [[480, 318], [565, 337], [450, 412], [382, 383]], color: '#9fc6e4', count: 10, fill: '#d9ebf3' },
];

const greenTags: Point[] = [
  [280, 96], [48, 190], [150, 215], [258, 295], [422, 223], [498, 232], [416, 293],
  [498, 322], [625, 50], [748, 48],
];

const tealTags: Point[] = [
  [350, 211], [540, 160], [155, 306], [362, 297], [582, 318], [272, 352], [466, 390], [730, 232],
];

function Scene() {
  return (
    <svg
      className="h-full w-full"
      fill="none"
      preserveAspectRatio="xMidYMid slice"
      viewBox="12 39 744 384"
    >
      <defs>
        <linearGradient id="sky" x1="0" x2="0" y1="0" y2="1">
          <stop offset="0" stopColor="#5d9fd6" />
          <stop offset=".35" stopColor="#a6cbe8" />
          <stop offset=".75" stopColor="#eef5fb" />
          <stop offset="1" stopColor="#fff" />
        </linearGradient>
      </defs>
      <path d="M12 39h744v384H12z" fill="url(#sky)" />
      {slabs.map((slab) => (
        <g key={toPoints(slab.points)}>
          <polygon
            points={toPoints(slab.points)}
            stroke="#b5b9ba"
            strokeWidth="5"
          />
          <Loops {...slab} />
        </g>
      ))}
      <path d="M270 275l20-12 90 12 60-40 44-16 6 18-60 42-60 18-60-8z" fill="#f1eeeb" stroke="#cfc4c4" strokeWidth="2" />
      <path d="M280 268l90 12 80-48M282 276l86 12 84-46M290 284l80 8 70-36" stroke="#cba3ab" strokeWidth="2" />
      <path d="M285 290l60-14 70 4-60 24z" fill="#bda9cf" opacity=".5" />
      <path d="M450 190v34M458 192v34M466 192v36M474 190v36M482 188v40" stroke="#a59ac9" strokeWidth="3" />
      <path d="M218 255l38-10v52l-38 4z" fill="#e9e2dc" stroke="#bbb" />
      <path d="M228 270l22-6v30l-22 4z" fill="#6c56a5" />
      <path d="M190 288l60 10M230 300h30" stroke="#8f54a8" strokeWidth="3" />
      {greenTags.map(([x, y]) => (
        <g key={`${x}-${y}`} transform={`translate(${x} ${y}) skewX(-12)`}>
          <rect fill="#5a9a68" height="18" rx="6" width="34" x="-17" y="-9" />
          <path d="M-10-3H10M-8 3H8" stroke="#b9e0bf" strokeWidth="2" />
        </g>
      ))}
      {tealTags.map(([x, y]) => (
        <g key={`${x}-${y}`} transform={`translate(${x} ${y}) rotate(-28)`}>
          <rect fill="#a9d6d3" height="13" rx="4" stroke="#3f8f8d" strokeWidth="2" width="48" x="-24" y="-6" />
          <path d="M-17 0H17" stroke="#4c9a98" strokeDasharray="4 2" strokeWidth="5" />
        </g>
      ))}
      {/* navigation cube */}
      <ellipse cx="643" cy="188" rx="68" ry="36" stroke="#b4bcc2" strokeOpacity=".9" strokeWidth="18" />
      <path d="M602 206l-22 18M696 200l28 12" stroke="#444" strokeWidth="3" />
      <path d="M573 228l6-12 8 9zM727 214l-12 0 5-10z" fill="#444" />
      <path d="M588 122l47-21 62 12-44 28z" fill="#6a6d70" stroke="#888" />
      <path d="M588 122l65 19-2 73-58-23z" fill="#36393b" stroke="#777" />
      <path d="M697 113l-44 28-2 73 40-32z" fill="#4b4e51" stroke="#888" />
      <g fill="#e8e8e8" fontSize="20" fontWeight="bold">
        <text transform="translate(608 172) skewY(14)">前</text>
        <text transform="translate(664 174) skewY(-30)">右</text>
        <text fontSize="17" transform="translate(632 127) skewX(-20)">上</text>
      </g>
      {/* axes */}
      <path d="M100 330v-50M100 332l-30 18M100 332l44 16" stroke="#000" strokeWidth="5" />
      <path d="M100 270l9 30H91zM58 358l18-16 8 12zM158 352l-28 1 8-16z" fill="#000" />
      <circle cx="100" cy="332" fill="#000" r="8" />
      <g fill="#111" fontSize="24">
        <text x="107" y="261">Z</text>
        <text x="65" y="347">X</text>
        <text x="162" y="340">Y</text>
      </g>
    </svg>
  );
}

function ScenePanel() {
  const status = [Eye, Layers, Eye, Circle, Droplet, Grid2x2, Box, Table2, Copy, Minus, Flag];
  return (
    <section className="mt-px flex min-h-0 flex-[128] basis-[35px] flex-col">
      <div className="flex h-3 shrink-0 items-center px-[3px]">
        <SketchIcon />
        <span className="mx-[3px] size-[3px] rounded-full bg-[#111]" />
        3D视图
        <DottedGrip />
        <PanelTools />
      </div>
      <div className="min-h-0 flex-1">
        <Scene />
      </div>
      <div className="flex h-3 shrink-0 items-center">
        <FloorArrows />
        <div className="flex h-3 w-[87px] shrink-0 items-center border border-[#d2d2d2] bg-[#dfe0e3] pl-[2px]">
          <svg className="size-2" viewBox="0 0 16 16">
            <path d="M1 3l7-2 7 2-5 6v5l-4 1V9z" fill="#53b0e4" stroke="#3a86b4" />
            <path d="M10 9l5 5" stroke="#e3b13c" strokeWidth="3" />
          </svg>
          <svg className="ml-3 size-2" fill="none" viewBox="0 0 16 16">
            <path d="M1 8h4v7H1zM5 4h4v11H5z" fill="#3b6fa5" />
            <path d="M10 1h5M12.500 1v14M10 15h5" stroke="#d9a12c" strokeWidth="2" />
          </svg>
          <select
            aria-label="可见的楼层"
            className="w-0 flex-1 appearance-none bg-transparent pl-[3px] leading-[8px]"
            defaultValue="可见的楼层"
          >
            <option>可见的楼层</option>
          </select>
          <ChevronDown className="mr-[2px] size-[6px]" strokeWidth={3} />
        </div>
        <LayerTabs marks="bbbbbbxxb" />
      </div>
      <footer className="flex h-3 shrink-0 items-center bg-[#0b78cf] pr-3 pl-2 text-white">
        <div className="flex gap-[6px]">
          {status.map((Icon, i) => (
            <Icon
              className={clsx(
                'size-[7px]',
                [1, 3, 4, 5].includes(i) ? 'opacity-40' : 'fill-white/50'
              )}
              key={i}
              strokeWidth={3}
            />
          ))}
        </div>
        <span className="ml-auto">155.521; -58.883; -1.474</span>
      </footer>
    </section>
  );
}

function SideStrip() {
  const tab =
    'flex w-4 shrink-0 flex-col items-center gap-[2px] border-[#c3c5c9] border-l-2 pr-[2px] text-[#333]';
  const text = 'shrink-0 whitespace-nowrap [writing-mode:vertical-rl] [text-orientation:sideways]';
  return (
    <div className="flex w-4 shrink-0 flex-col gap-1 pt-[2px]">
      <div className={clsx(tab, 'h-[53px]')}>
        <svg className="size-2 shrink-0" viewBox="0 0 16 16">
          <path d="M0 1h16v4H0z" fill="#3b7fd0" />
          <path d="M1 8h14M1 12h14M5 6v9M10 6v9" stroke="#9ab0c6" />
        </svg>
        <span className={text}>项目浏览器</span>
        <Pin className="size-[5px] shrink-0 -rotate-90 fill-current" />
        <X className="size-[5px] shrink-0" strokeWidth={3} />
      </div>
      <div className={clsx(tab, 'h-[35px]')}>
        <svg className="size-2 shrink-0" fill="none" viewBox="0 0 16 16">
          <path d="M1 1l6 6" stroke="#e58a2c" strokeWidth="3" />
          <circle cx="10" cy="10" fill="#d8ecfb" r="4.5" stroke="#3b84c9" strokeWidth="2" />
        </svg>
        <span className={text}>查找</span>
        <Pin className="size-[5px] shrink-0 -rotate-90 fill-current" />
        <X className="size-[5px] shrink-0" strokeWidth={3} />
      </div>
    </div>
  );
}

function DocumentTabs() {
  return (
    <div className="flex h-[13px] shrink-0 items-center pt-px text-[#333]">
      <button
        className="flex h-3 w-[49px] items-center gap-[2px] bg-[#d3d4d8] pl-1 text-[#555]"
        type="button"
      >
        <Art className="size-[7px]" name="burner" />
        一般参数
        <X className="ml-[2px] size-[6px]" />
      </button>
      <button className="ml-1 flex items-center gap-1" type="button">
        <Copy className="size-[6px] text-[#5b9bc9]" />
        结果
      </button>
      <button className="ml-[15px] flex items-center gap-[3px]" type="button">
        <Printer className="size-2 fill-[#bbb]" />
        打印输出
      </button>
      <ChevronDown className="mr-px ml-auto size-[6px]" />
    </div>
  );
}

export default function App() {
  return (
    <div className="flex h-screen min-h-[446px] w-full flex-col overflow-hidden border-[#84bae3] border-t bg-[#efefef] font-['Open_Sans','Noto_Sans_CJK_SC',sans-serif] text-[#222] text-[6px] leading-[8px]">
      <TitleBar />
      <Ribbon />
      <div className="flex min-h-0 flex-1 pb-1">
        <SideStrip />
        <main className="flex min-w-0 flex-1 flex-col pt-[2px]">
          <DocumentTabs />
          <div className="flex min-h-0 flex-1 gap-[2px]">
            <NavigationTree />
            <SourceForm />
          </div>
          <Diagnostics />
        </main>
        <div className="flex w-[28%] shrink-0 flex-col pt-[2px] pr-[3px] pl-[2px]">
          <PlanPanel />
          <ScenePanel />
        </div>
      </div>
    </div>
  );
}
